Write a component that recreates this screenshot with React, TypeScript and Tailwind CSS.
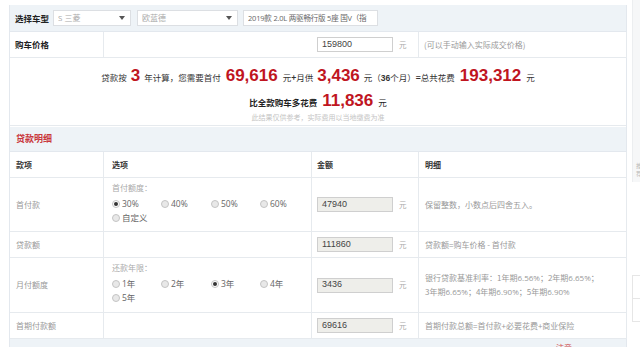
import React from 'react';

const cjk = "font-['Noto_Sans_CJK_SC','Noto_Sans',sans-serif]";

function Select({ text, width, dark }: { text: string; width: string; dark?: boolean }) {
  return (
    <div className={`${width} h-[16px] bg-white border border-[#dcdfe3] flex items-center pl-[4px] pr-[4px] overflow-hidden`}>
      <span className={`flex-1 whitespace-nowrap overflow-hidden leading-[12px] ${dark ? 'text-[7.5px] text-[#666] tracking-[-0.2px]' : 'text-[8px] text-[#aaa]'} font-['Open_Sans','Noto_Sans_CJK_SC',sans-serif]`}>
        {text}
      </span>
      {!dark && (
        <svg width="6" height="4" viewBox="0 0 6 4" className="shrink-0 mr-[1px]">
          <path d="M0 0 L6 0 L3 4 Z" fill="#555" />
        </svg>
      )}
    </div>
  );
}

function Radio({ label, checked }: { label: string; checked?: boolean }) {
  return (
    <div className="flex items-center gap-[2px] h-[14px]">
      <span className={`w-[8px] h-[8px] rounded-full border border-[#c4c4c4] flex items-center justify-center ${checked ? 'bg-white' : 'bg-[#e8e8e8]'}`}>
        {checked && <span className="w-[4px] h-[4px] rounded-full bg-[#333]" />}
      </span>
      <span className="text-[8.5px] text-[#666] font-['Open_Sans','Noto_Sans_CJK_SC',sans-serif] leading-none">{label}</span>
    </div>
  );
}

function Amount({ value, white }: { value: string; white?: boolean }) {
  return (
    <div className="flex items-center pl-[5px]">
      <div className={`w-[76px] h-[15px] border border-[#cfcfcf] flex items-center pl-[4px] text-[9px] text-[#444] font-['Liberation_Sans',sans-serif] ${white ? 'bg-white' : 'bg-[#eeeeea]'}`}>
        {value}
      </div>
      <span className="ml-[6px] text-[7.5px] text-[#aaa]">元</span>
    </div>
  );
}

const cell = 'border-r border-b border-[#e6eaee] flex items-center';
const red = "text-[17px] font-bold text-[#c0151f] font-['Liberation_Sans',sans-serif]";

export default function App() {
  return (
    <div className={`w-[640px] h-[347px] overflow-hidden bg-white flex items-start ${cjk}`}>
      <div className="ml-[9px] mt-[5px] w-[618px] shrink-0 border-l border-r border-[#e3e8ee]">
        {/* 选择车型 */}
        <div className="h-[27px] bg-[#eef3f7] border-b border-[#e3e8ee] flex items-center pl-[5px]">
          <span className="w-[38px] text-[8.5px] font-bold text-[#222]">选择车型</span>
          <Select text="S 三菱" width="w-[78px]" />
          <div className="w-[6px]" />
          <Select text="欧蓝德" width="w-[101px]" />
          <div className="w-[5px]" />
          <Select text="2019款 2.0L 两驱畅行版 5座 国V（指" width="w-[135px]" dark />
        </div>

        {/* 购车价格 */}
        <div className="grid grid-cols-[94px_208px_107px_208px] h-[26px]">
          <div className={`${cell} pl-[5px] text-[8.5px] font-bold text-[#222]`}>购车价格</div>
          <div className="border-b border-[#e6eaee]" />
          <div className={cell}>
            <Amount value="159800" white />
          </div>
          <div className={`${cell} pl-[5px] text-[8px] text-[#999]`}>(可以手动输入实际成交价格)</div>
        </div>

        {/* summary */}
        <div className="h-[68px] border-b border-[#e6eaee] flex flex-col items-center">
          <div className="mt-[5px] flex items-baseline text-[8.5px] text-[#333] whitespace-nowrap">
            <span>贷款按</span>
            <span className={`mx-[4px] ${red}`}>3</span>
            <span>年计算，您需要首付</span>
            <span className={`mx-[5px] ${red}`}>69,616</span>
            <span>元<b>+</b>月供</span>
            <span className={`mx-[4px] ${red}`}>3,436</span>
            <span>元（<b className="font-['Liberation_Sans',sans-serif]">36</b>个月）<b>=</b>总共花费</span>
            <span className={`mx-[5px] ${red}`}>193,312</span>
            <span>元</span>
          </div>
          <div className="flex items-baseline text-[8.5px] text-[#222] whitespace-nowrap -mt-[1px]">
            <span className="font-semibold">比全款购车多花费</span>
            <span className={`mx-[5px] ${red}`}>11,836</span>
            <span>元</span>
          </div>
          <div className="text-[7px] text-[#c4c4c4] leading-none mt-[1px]">此结果仅供参考，实际费用以当地缴费为准</div>
        </div>

        {/* 贷款明细 */}
        <div className="h-[25px] mt-[1px] bg-[#eef3f7] border-b border-[#e3e8ee] flex items-center pl-[6px]">
          <span className="text-[9px] font-bold text-[#c9373c]">贷款明细</span>
        </div>

        <div className="grid grid-cols-[94px_208px_107px_208px] text-[8px]">
          {/* header */}
          <div className={`${cell} h-[26px] pl-[6px] font-bold text-[#333]`}>款项</div>
          <div className={`${cell} pl-[8px] font-bold text-[#333]`}>选项</div>
          <div className={`${cell} pl-[5px] font-bold text-[#333]`}>金额</div>
          <div className={`${cell} pl-[6px] font-bold text-[#333]`}>明细</div>

          {/* 首付款 */}
          <div className={`${cell} h-[54px] pl-[6px] text-[#999]`}>首付款</div>
          <div className={`${cell} pl-[8px] !items-start flex-col pt-[4px]`}>
            <span className="text-[#aaa] leading-[12px]">首付额度：</span>
            <div className="grid grid-cols-[49px_50px_49px_50px] mt-[3px]">
              <Radio label="30%" checked />
              <Radio label="40%" />
              <Radio label="50%" />
              <Radio label="60%" />
              <Radio label="自定义" />
            </div>
          </div>
          <div className={cell}><Amount value="47940" /></div>
          <div className={`${cell} pl-[6px] text-[#999]`}>保留整数，小数点后四舍五入。</div>

          {/* 贷款额 */}
          <div className={`${cell} h-[26px] pl-[6px] text-[#999]`}>贷款额</div>
          <div className={cell} />
          <div className={cell}><Amount value="111860" /></div>
          <div className={`${cell} pl-[6px] text-[#999]`}>贷款额=购车价格 - 首付款</div>

          {/* 月付额度 */}
          <div className={`${cell} h-[55px] pl-[6px] text-[#999]`}>月付额度</div>
          <div className={`${cell} pl-[8px] !items-start flex-col pt-[4px]`}>
            <span className="text-[#aaa] leading-[12px]">还款年限：</span>
            <div className="grid grid-cols-[49px_50px_49px_50px] mt-[3px]">
              <Radio label="1年" />
              <Radio label="2年" />
              <Radio label="3年" checked />
              <Radio label="4年" />
              <Radio label="5年" />
            </div>
          </div>
          <div className={cell}><Amount value="3436" /></div>
          <div className={`${cell} pl-[6px] text-[#999] leading-[14px]`}>
            <div>
              <div>银行贷款基准利率：1年期<span className="font-['Open_Sans',sans-serif]">6.56%</span>；2年期<span className="font-['Open_Sans',sans-serif]">6.65%</span>；</div>
              <div>3年期<span className="font-['Open_Sans',sans-serif]">6.65%</span>；4年期<span className="font-['Open_Sans',sans-serif]">6.90%</span>；5年期<span className="font-['Open_Sans',sans-serif]">6.90%</span></div>
            </div>
          </div>

          {/* 首期付款额 */}
          <div className={`${cell} h-[26px] pl-[6px] text-[#999]`}>首期付款额</div>
          <div className={cell} />
          <div className={cell}><Amount value="69616" /></div>
          <div className={`${cell} pl-[6px] text-[#999]`}>首期付款总额=首付款+必要花费+商业保险</div>
        </div>

        {/* bottom */}
        <div className="h-[24px] bg-[#eef3f7] flex items-start pl-[546px] pt-[4px]">
          <span className="text-[8px] leading-[10px] text-[#d05050]">注意</span>
        </div>
      </div>

      {/* right sidebar */}
      <div className="ml-[5px] w-[30px] shrink-0 flex flex-col">
        <div className="h-[182px] bg-[#f6f7f8] border-l border-[#eceef0] flex flex-col justify-end pb-[4px] pl-[3px]">
          <span className="text-[6px] leading-[8px] text-[#bbb]">推</span>
          <span className="text-[6px] leading-[8px] text-[#bbb]">荐</span>
        </div>
        <div className="mt-[93px] border border-[#e6e6e6] h-[24px]" />
        <div className="border border-t-0 border-[#e6e6e6] h-[23px]" />
      </div>
    </div>
  );
}
